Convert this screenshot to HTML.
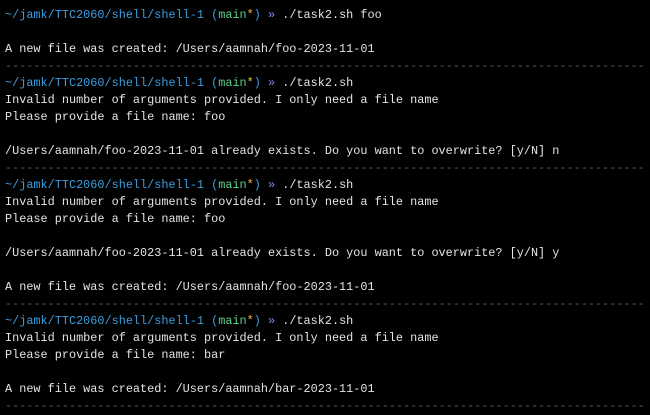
<!DOCTYPE html>
<html><head><meta charset="utf-8"><style>
html,body{margin:0;padding:0;background:#000;width:650px;height:409px;overflow:hidden}
pre{margin:0;position:absolute;left:5px;top:7px;font-family:"Liberation Mono",monospace;font-size:11.85px;line-height:17px;color:#e4e4e4;white-space:pre}
.b{color:#3b9ee0}.g{color:#5ccf8a}.y{color:#f0c232}.p{color:#8a86f2}.d{color:#5c5c5c}
</style></head><body><pre><span class="b">~/jamk/TTC2060/shell/shell-1</span> <span class="b">(</span><span class="g">main</span><span class="y">*</span><span class="b">)</span> <span class="p">»</span> ./task2.sh foo

A new file was created: /Users/aamnah/foo-2023-11-01
<span class="d">------------------------------------------------------------------------------------------</span>
<span class="b">~/jamk/TTC2060/shell/shell-1</span> <span class="b">(</span><span class="g">main</span><span class="y">*</span><span class="b">)</span> <span class="p">»</span> ./task2.sh
Invalid number of arguments provided. I only need a file name
Please provide a file name: foo

/Users/aamnah/foo-2023-11-01 already exists. Do you want to overwrite? [y/N] n
<span class="d">------------------------------------------------------------------------------------------</span>
<span class="b">~/jamk/TTC2060/shell/shell-1</span> <span class="b">(</span><span class="g">main</span><span class="y">*</span><span class="b">)</span> <span class="p">»</span> ./task2.sh
Invalid number of arguments provided. I only need a file name
Please provide a file name: foo

/Users/aamnah/foo-2023-11-01 already exists. Do you want to overwrite? [y/N] y

A new file was created: /Users/aamnah/foo-2023-11-01
<span class="d">------------------------------------------------------------------------------------------</span>
<span class="b">~/jamk/TTC2060/shell/shell-1</span> <span class="b">(</span><span class="g">main</span><span class="y">*</span><span class="b">)</span> <span class="p">»</span> ./task2.sh
Invalid number of arguments provided. I only need a file name
Please provide a file name: bar

A new file was created: /Users/aamnah/bar-2023-11-01
<span class="d">------------------------------------------------------------------------------------------</span></pre></body></html>
